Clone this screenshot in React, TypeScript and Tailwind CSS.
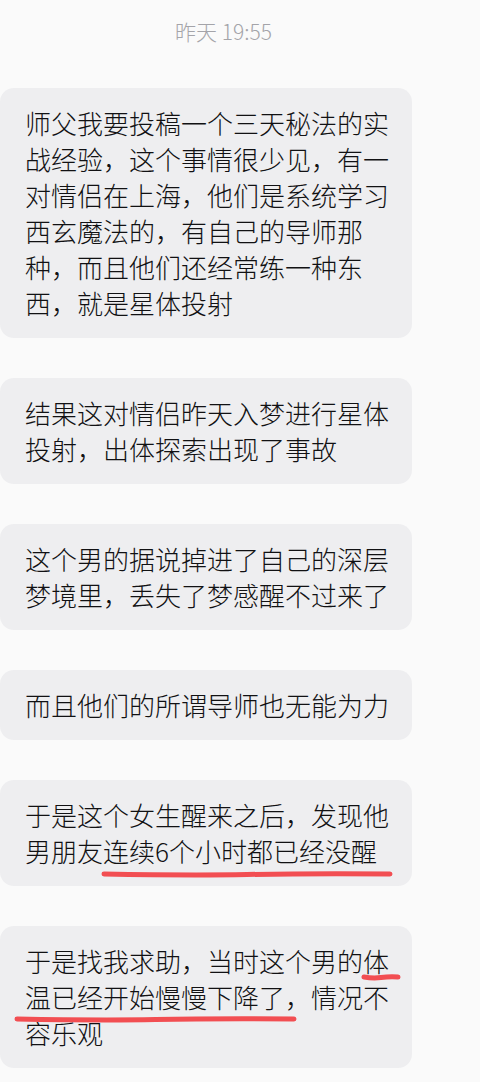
import React from "react";

const FONT = { fontFamily: '"Noto Sans CJK SC", "Noto Sans", sans-serif' };

type Mark = { left: number; top: number; width: number };

function Bubble({ lines, marks = [] }: { lines: string[]; marks?: Mark[] }) {
  return (
    <div className="relative w-[412px] rounded-[14px] bg-[#eeeef0] pl-[25px] pr-[20px] py-[17px] text-[26px] font-light leading-[36px] text-[#111113]">
      {lines.map((l, i) => (
        <div key={i} className="whitespace-nowrap">
          {l}
        </div>
      ))}
      {marks.map((m, i) => (
        <svg
          key={i}
          className="absolute"
          style={{ left: m.left, top: m.top, width: m.width, height: 8 }}
          viewBox={`0 0 ${m.width} 8`}
          preserveAspectRatio="none"
        >
          <path
            d={`M3 4 Q ${m.width * 0.3} 5.5 ${m.width * 0.5} 4.5 T ${m.width - 3} 4`}
            stroke="#f24e52"
            strokeWidth="5"
            strokeLinecap="round"
            fill="none"
          />
        </svg>
      ))}
    </div>
  );
}

export default function App() {
  return (
    <div className="min-h-[1082px] w-[480px] overflow-hidden bg-[#fafafa]" style={FONT}>
      <div className="flex h-[62px] justify-center pr-[33px] pt-[18px] text-[21px] font-light leading-[26px] text-[#a4a4a9]">
        昨天 19:55
      </div>
      <div className="flex flex-col gap-[40px] pt-[26px]">
        <Bubble
          lines={[
            "师父我要投稿一个三天秘法的实",
            "战经验，这个事情很少见，有一",
            "对情侣在上海，他们是系统学习",
            "西玄魔法的，有自己的导师那",
            "种，而且他们还经常练一种东",
            "西，就是星体投射",
          ]}
        />
        <Bubble lines={["结果这对情侣昨天入梦进行星体", "投射，出体探索出现了事故"]} />
        <Bubble lines={["这个男的据说掉进了自己的深层", "梦境里，丢失了梦感醒不过来了"]} />
        <Bubble lines={["而且他们的所谓导师也无能为力"]} />
        <Bubble
          lines={["于是这个女生醒来之后，发现他", "男朋友连续6个小时都已经没醒"]}
          marks={[{ left: 101, top: 90, width: 292 }]}
        />
        <Bubble
          lines={["于是找我求助，当时这个男的体", "温已经开始慢慢下降了，情况不", "容乐观"]}
          marks={[
            { left: 361, top: 47, width: 40 },
            { left: 14, top: 89, width: 283 },
          ]}
        />
      </div>
    </div>
  );
}
